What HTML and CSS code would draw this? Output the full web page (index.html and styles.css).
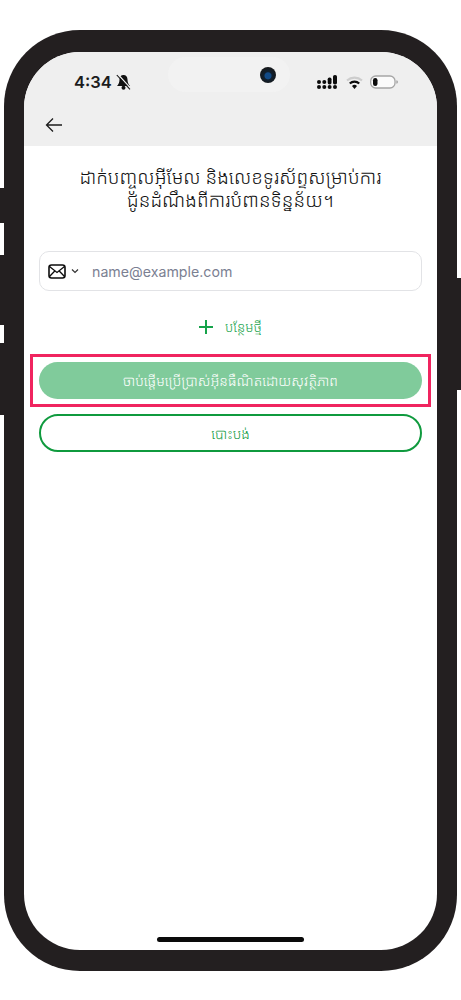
FILE: index.html
```html
<!DOCTYPE html>
<html lang="km">
<head>
<meta charset="utf-8">
<title>Email</title>
<link rel="stylesheet" href="styles.css">
</head>
<body>
<div class="stage">
  <div class="phone">
    <span class="side side-a"></span>
    <span class="side side-b"></span>
    <span class="side side-c"></span>
    <span class="side side-r"></span>
    <div class="screen">
      <span class="island"><span class="camera"></span></span>
      <header class="topbar">
        <div class="status">
          <div class="status-left">
            <span class="time">4:34</span>
            <svg class="bell" viewBox="0 0 15 16" width="15" height="16"><path d="M7.500 1C5 1 3.500 3 3.500 5.500c0 3.200-1 4.600-2.500 6.500h13c-1.500-1.900-2.500-3.300-2.500-6.500C11.500 3 10 1 7.500 1z" fill="#111"/><circle cx="7.500" cy="13.800" r="2" fill="#111"/><path d="M1.800 0.200 15 14.600" stroke="#efefef" stroke-width="1.300"/><path d="M0.800 1 14 15.400" stroke="#111" stroke-width="1.100"/></svg>
          </div>
          <div class="status-right">
            <svg viewBox="0 0 21 14" width="21" height="14"><g fill="#0c0c0c"><circle cx="2" cy="7" r="2"/><circle cx="2" cy="12" r="2"/><circle cx="7.300" cy="7" r="2"/><circle cx="7.300" cy="12" r="2"/><rect x="10.700" y="2.500" width="3.800" height="7" rx="1.700"/><circle cx="12.600" cy="12" r="2"/><rect x="16" y="0" width="4" height="9.500" rx="1.800"/><circle cx="18" cy="12" r="2"/></g></svg>
            <svg viewBox="0 0 17 13" width="17" height="13"><path d="M1 4.500a11.500 11.500 0 0 1 15 0" fill="none" stroke="#cdcdcd" stroke-width="2.200"/><path d="M3.800 7.500a7 7 0 0 1 9.400 0" fill="none" stroke="#0c0c0c" stroke-width="2.200"/><path d="M6 10a3.500 3.500 0 0 1 5 0l-2.500 3z" fill="#0c0c0c"/></svg>
            <svg viewBox="0 0 28 14" width="28" height="14"><rect x="0.700" y="1" width="24.300" height="12" rx="5" fill="#fbfbfb" stroke="#a6a6a6" stroke-width="1.300"/><rect x="3" y="3" width="4.500" height="8" rx="2.200" fill="#0c0c0c"/><path d="M26.300 5.300a1.700 1.700 0 0 1 0 3.400z" fill="#a6a6a6"/></svg>
          </div>
        </div>
        <div class="nav">
          <svg viewBox="0 0 18 16" width="18" height="16"><path d="M17 8H1.500M8 1.500 1.500 8 8 14.500" fill="none" stroke="#1c1c1c" stroke-width="1.300"/></svg>
        </div>
      </header>
      <main class="content">
        <h1 class="title">ដាក់បញ្ចូលអ៊ីមែល និងលេខទូរស័ព្ទសម្រាប់ការ<br>ជូនដំណឹងពីការបំពានទិន្នន័យ។</h1>
        <div class="field">
          <svg class="mail" viewBox="0 0 18 15" width="18" height="15"><rect x="1" y="1" width="16" height="13" rx="2.500" fill="none" stroke="#0d0d0d" stroke-width="1.600"/><path d="M1.500 2.500 9 8.500l7.500-6M1.500 12.500 7 6.800M16.500 12.500 11 6.800" fill="none" stroke="#0d0d0d" stroke-width="1.300"/></svg>
          <svg class="chev" viewBox="0 0 8 6" width="8" height="6"><path d="M1 1.500 4 4.500 7 1.500" fill="none" stroke="#333" stroke-width="1.200"/></svg>
          <span class="placeholder">name@example.com</span>
        </div>
        <div class="add">
          <svg viewBox="0 0 16 16" width="16" height="16"><path d="M8 1v14M1 8h14" stroke="#16a34a" stroke-width="2"/></svg>
          <span>បន្ថែមថ្មី</span>
        </div>
        <div class="highlight">
          <button class="primary">ចាប់ផ្តើមប្រើប្រាស់អ៊ីនធឺណិតដោយសុវត្ថិភាព</button>
        </div>
        <button class="secondary">បោះបង់</button>
      </main>
      <span class="home"></span>
    </div>
  </div>
</div>
</body>
</html>
```
FILE: styles.css
```css
* { box-sizing: border-box; }
html, body { margin: 0; background: #fff; }
body { font-family: "Noto Sans Khmer", "Khmer OS", "Noto Sans", "DejaVu Sans", sans-serif; }
.stage { width: 461px; height: 1000px; padding: 30px 4px 29px; }
.phone {
  position: relative;
  height: 941px;
  background: #231f20;
  border-radius: 76px;
  padding: 22px 20px 21px;
}
.side { position: absolute; width: 4px; background: #231f20; left: -4px; }
.side-a { top: 158px; height: 35px; }
.side-b { top: 225px; height: 70px; }
.side-c { top: 313px; height: 72px; }
.side-r { left: auto; right: -4px; top: 248px; height: 112px; }
.screen {
  position: relative;
  height: 100%;
  background: #fff;
  border-radius: 56px;
  overflow: hidden;
}
.island {
  position: absolute;
  left: 144px; top: 5px;
  width: 122px; height: 35px;
  border-radius: 18px;
  background: #f2f2f2;
}
.camera {
  position: absolute;
  left: 92px; top: 10px;
  width: 16px; height: 16px;
  border-radius: 50%;
  background: radial-gradient(circle at 50% 55%, #124a86 0 3px, #10202f 4px, #16191c 8px);
}
.topbar { background: #efefef; height: 94px; }
.status {
  height: 58px;
  padding: 20px 39px 0 50px;
  display: flex;
  justify-content: space-between;
  align-items: flex-start;
}
.status-left { display: flex; align-items: center; gap: 4px; }
.time { font: 600 16.5px/20px "Inter", "Liberation Sans", sans-serif; color: #1c1c1c; }
.status-right { display: flex; align-items: center; gap: 7.5px; position: relative; z-index: 1; height: 20px; }
.nav { padding: 7px 0 0 21px; }
.nav svg { display: block; }
.content { padding: 20px 15px 0; display: flex; flex-direction: column; }
.title {
  margin: 0;
  font-weight: 300;
  font-size: 19px;
  line-height: 23px;
  text-align: center;
  color: #111;
}
.field {
  margin-top: 39px;
  height: 40px;
  border: 1px solid #e2e3e6;
  border-radius: 10px;
  display: flex;
  align-items: center;
  padding-left: 8px;
}
.chev { margin-left: 5px; }
.placeholder { margin-left: 13px; font: 400 14.2px "Inter", "Liberation Sans", sans-serif; color: #7b8092; }
.add {
  margin-top: 25px;
  height: 22px;
  display: flex;
  justify-content: center;
  align-items: center;
  gap: 11px;
  color: #16a34a;
  font-size: 13.5px;
  font-weight: 300;
  padding-right: 1px;
}
.highlight {
  margin: 16px -9px 0;
  height: 53px;
  border: 3px solid #f0245f;
  padding: 5px 6px;
}
.primary, .secondary {
  display: block;
  width: 100%;
  border-radius: 20px;
  font-family: inherit;
  font-size: 14px;
  font-weight: 300;
  text-align: center;
}
.primary { height: 37px; background: #80cb9b; border: 0; color: #fff; }
.secondary { margin-top: 7px; height: 38px; background: #fff; border: 2px solid #0f9a3e; color: #0f9a3e; }
.home {
  position: absolute;
  left: 133px; bottom: 8px;
  width: 147px; height: 5px;
  border-radius: 3px;
  background: #0a0a0a;
}
```
